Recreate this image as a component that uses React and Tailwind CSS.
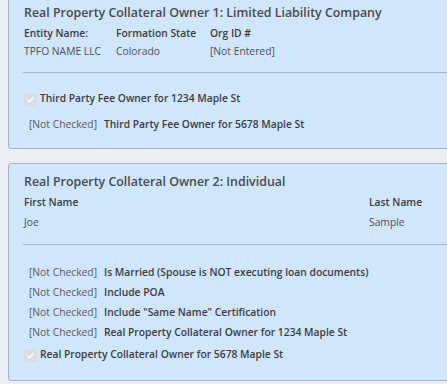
import React from 'react';

const font = { fontFamily: '"Open Sans", "Noto Sans", sans-serif' };

const CheckedBox = () => (
  <span className="inline-flex items-center justify-center w-[13px] h-[13px] rounded-[2px] bg-[#d9dde1] mr-[3px] shrink-0">
    <svg width="9" height="9" viewBox="0 0 10 10">
      <path d="M1.5 5.2 L4 7.6 L8.6 2.2" stroke="#f4f6f8" strokeWidth="1.8" fill="none" />
    </svg>
  </span>
);

const NotCheckedRow = ({ text }) => (
  <div className="flex items-center h-5 pl-[5px]">
    <span className="w-[75px] text-[#5b5b5b]">[Not Checked]</span>
    <span className="font-semibold text-[#3c3c3c]">{text}</span>
  </div>
);

const CheckedRow = ({ text }) => (
  <div className="flex items-center h-5">
    <CheckedBox />
    <span className="font-semibold text-[#3c3c3c]">{text}</span>
  </div>
);

const Card = ({ children, className }) => (
  <div className={`bg-[#cfe6fc] border border-[#a3b1bf] rounded-[3px] mr-[-30px] pl-[15px] ${className}`}>
    {children}
  </div>
);

export default function App() {
  return (
    <div className="w-[447px] h-[384px] overflow-hidden bg-[#eaeef3] text-[10.3px] pl-2" style={font}>
      <Card className="-mt-[10px] pt-[11px] h-[159px]">
        <div className="text-[12.4px] font-semibold text-[#4a4a4a] leading-[22px]">
          Real Property Collateral Owner 1: Limited Liability Company
        </div>
        <div className="flex font-semibold text-[#3c3c3c] h-[18px] items-center mt-[1px]">
          <span className="w-[92px]">Entity Name:</span>
          <span className="w-[94px]">Formation State</span>
          <span>Org ID #</span>
        </div>
        <div className="flex text-[#505050] h-[18px] items-center">
          <span className="w-[92px]">TPFO NAME LLC</span>
          <span className="w-[94px]">Colorado</span>
          <span>[Not Entered]</span>
        </div>
        <div className="border-t border-[#a9bccd] mt-[11px] mb-[16px] -ml-[1px]" />
        <CheckedRow text="Third Party Fee Owner for 1234 Maple St" />
        <div className="mt-[6px]">
          <NotCheckedRow text="Third Party Fee Owner for 5678 Maple St" />
        </div>
      </Card>
      <Card className="mt-[14px] pt-[7px] h-[218px]">
        <div className="text-[12.4px] font-semibold text-[#4a4a4a] leading-[22px]">
          Real Property Collateral Owner 2: Individual
        </div>
        <div className="flex font-semibold text-[#3c3c3c] h-5 items-center">
          <span className="w-[345px]">First Name</span>
          <span>Last Name</span>
        </div>
        <div className="flex text-[#505050] h-5 items-center">
          <span className="w-[345px]">Joe</span>
          <span>Sample</span>
        </div>
        <div className="border-t border-[#a9bccd] mt-[11px] mb-[18px] -ml-[1px]" />
        <NotCheckedRow text="Is Married (Spouse is NOT executing loan documents)" />
        <NotCheckedRow text="Include POA" />
        <NotCheckedRow text='Include "Same Name" Certification' />
        <NotCheckedRow text="Real Property Collateral Owner for 1234 Maple St" />
        <div className="mt-[2px]">
          <CheckedRow text="Real Property Collateral Owner for 5678 Maple St" />
        </div>
      </Card>
    </div>
  );
}
